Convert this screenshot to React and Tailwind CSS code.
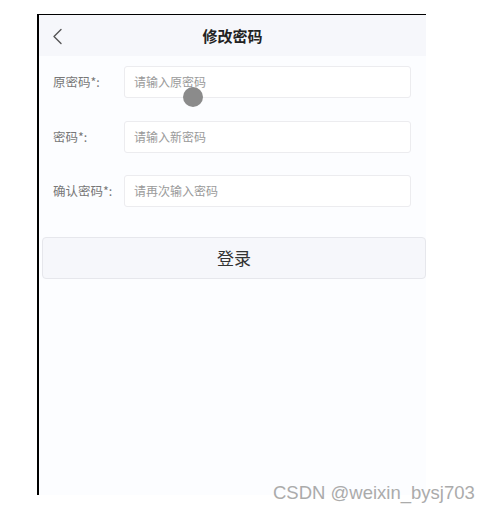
export default function App() {
  const rows = [
    { label: "原密码*:", ph: "请输入原密码", mt: "mt-[10px]" },
    { label: "密码*:", ph: "请输入新密码", mt: "mt-[23px]" },
    { label: "确认密码*:", ph: "请再次输入密码", mt: "mt-[22px]" },
  ];
  return (
    <div className="relative w-[492px] h-[515px] bg-white overflow-hidden" style={{ fontFamily: '"Noto Sans CJK SC", "Noto Sans", sans-serif' }}>
      <div className="ml-[37px] mt-[14px] w-[389px] h-[481px] border-l-2 border-t border-black bg-[#fcfdff] flex flex-col">
        <div className="relative h-[41px] bg-[#f6f7fb] flex items-center justify-center">
          <svg className="absolute left-[13px] top-[13px]" width="11" height="17" viewBox="0 0 11 17" fill="none">
            <path d="M9 1.5 L2 8.5 L9 15.5" stroke="#555" strokeWidth="1.4" strokeLinecap="round" strokeLinejoin="round" />
          </svg>
          <span className="text-[15px] font-bold text-[#222] leading-none">修改密码</span>
        </div>
        {rows.map((r, i) => (
          <div key={i} className={`flex items-center ${r.mt}`}>
            <div className="w-[85px] pl-[14px] text-[12.5px] text-[#777] whitespace-nowrap">{r.label}</div>
            <div className="w-[287px] h-[32px] border border-[#ececef] rounded-[3px] bg-white flex items-center pl-[9px] text-[12px] text-[#9a9a9a]">
              {r.ph}
            </div>
          </div>
        ))}
        <div className="mt-[30px] ml-[3px] w-[384px] h-[42px] bg-[#f6f7fb] border border-[#e6e7ec] rounded-[4px] flex items-center justify-center text-[17px] text-[#333]">
          登录
        </div>
      </div>
      <div className="absolute left-[183px] top-[87px] w-[20px] h-[20px] rounded-full bg-[#8b8b8b]"></div>
      <div className="absolute left-[273px] top-[484px] text-[18.5px] text-[#ababab] leading-none" style={{ fontFamily: '"Liberation Sans", Arial, sans-serif' }}>
        CSDN @weixin_bysj703
      </div>
    </div>
  );
}
